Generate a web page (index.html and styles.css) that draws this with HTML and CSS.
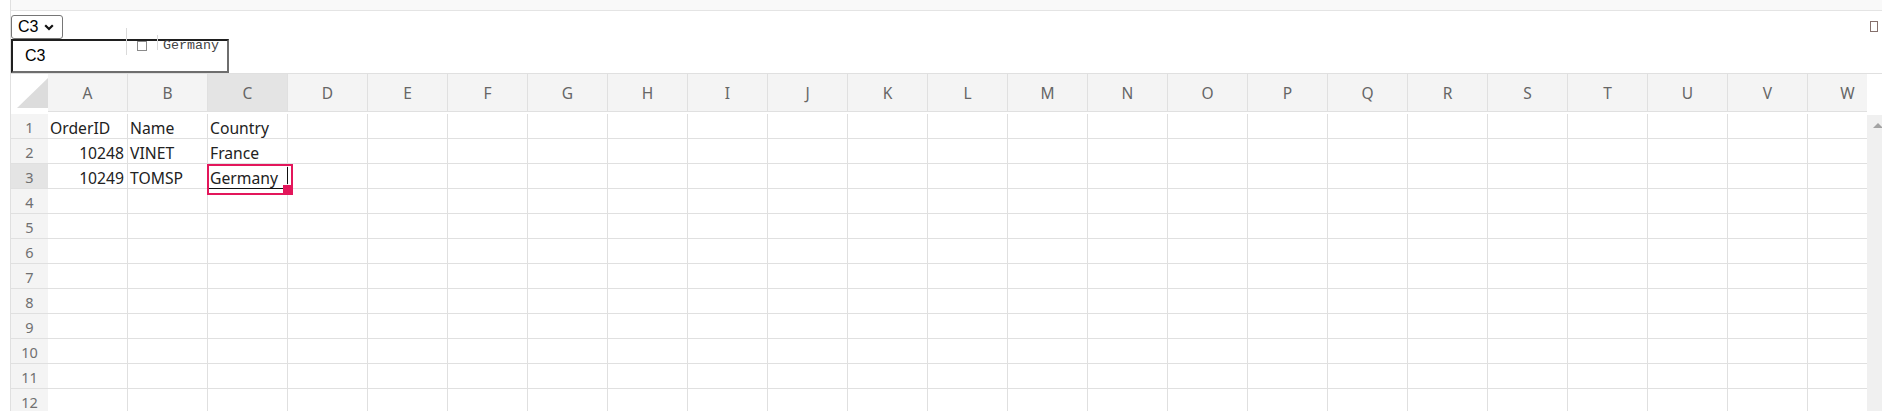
FILE: index.html
```html
<!DOCTYPE html>
<html>
<head>
<meta charset="utf-8">
<link rel="stylesheet" href="styles.css">
</head>
<body>
<div class="sheet">
  <div class="topbar"></div>
  <div class="ribbon">
    <div class="select"><span>C3</span><svg class="chev" width="10" height="7" viewBox="0 0 10 7"><path d="M1.2 1.2 L5 5 L8.8 1.2" fill="none" stroke="#111" stroke-width="2.2"/></svg></div>
    <div class="namebox">C3</div>
    <div class="formula">
      <span class="sep tall"></span>
      <span class="fx-box"></span>
      <span class="sep short"></span>
      <span class="fx-text">Germany</span>
    </div>
    <span class="tofu"></span>
  </div>
  <div class="grid">
    <div class="main">
      <div class="colheads">
        <div class="corner"><svg width="37" height="37" viewBox="0 0 37 37"><polygon points="6,34 37,34 37,4" fill="#dcdcdc"/></svg></div>
        <div class="ch">A</div><div class="ch">B</div><div class="ch active">C</div><div class="ch">D</div><div class="ch">E</div><div class="ch">F</div><div class="ch">G</div><div class="ch">H</div><div class="ch">I</div><div class="ch">J</div><div class="ch">K</div><div class="ch">L</div><div class="ch">M</div><div class="ch">N</div><div class="ch">O</div><div class="ch">P</div><div class="ch">Q</div><div class="ch">R</div><div class="ch">S</div><div class="ch">T</div><div class="ch">U</div><div class="ch">V</div><div class="ch">W</div>
      </div>
      <div class="rows" id="rows"></div>
    </div>
    <div class="vscroll"><span class="up"></span></div>
  </div>
</div>
<script src="app.js"></script>
</body>
</html>
```

FILE: app.js
```js
const data = [
  ["OrderID", "Name", "Country"],
  [{v: "10248", n: true}, "VINET", "France"],
  [{v: "10249", n: true}, "TOMSP", "Germany"]
];
const rows = document.getElementById("rows");
for (let r = 0; r < 13; r++) {
  const row = document.createElement("div");
  row.className = "row";
  const rh = document.createElement("div");
  rh.className = "rh" + (r === 2 ? " active" : "");
  rh.textContent = r + 1;
  row.appendChild(rh);
  for (let c = 0; c < 23; c++) {
    const cell = document.createElement("div");
    cell.className = "cell";
    const d = data[r] && data[r][c];
    if (d) {
      if (typeof d === "object") { cell.textContent = d.v; cell.classList.add("num"); }
      else cell.textContent = d;
    }
    if (r === 2 && c === 2) {
      cell.classList.add("selected");
      const sel = document.createElement("span"); sel.className = "sel-border";
      const vl = document.createElement("span"); vl.className = "ed-v";
      const hl = document.createElement("span"); hl.className = "ed-h";
      const fh = document.createElement("span"); fh.className = "fill";
      cell.append(sel, vl, hl, fh);
    }
    row.appendChild(cell);
  }
  rows.appendChild(row);
}
```

FILE: styles.css
```css
* { box-sizing: border-box; }
html, body { margin: 0; height: 100%; overflow: hidden; background: #fff; }
body { font-family: "Noto Sans", "Open Sans", sans-serif; color: #222; }

.sheet {
  margin-left: 10px;
  border-left: 1px solid #e0e0e0;
  height: 100%;
  display: flex;
  flex-direction: column;
}
.topbar { height: 11px; flex: none; background: #f9f9f9; border-bottom: 1px solid #e4e4e4; }

.ribbon { position: relative; flex: none; height: 62px; padding-top: 4px; }
.select {
  width: 52px; height: 24px;
  border: 1px solid #767676; border-radius: 3px;
  display: flex; align-items: center; gap: 6px;
  padding-left: 6px;
  font: 16px "Liberation Sans", Arial, sans-serif; color: #000;
}
.chev { display: block; margin-top: 1px; }
.namebox {
  width: 218px; height: 34px;
  border: 2px solid; border-color: #1f1f1f #6e6e6e #6e6e6e #1f1f1f;
  padding-left: 12px;
  display: flex; align-items: center;
  font: 16px "Liberation Sans", Arial, sans-serif; color: #000;
}
.formula {
  position: absolute; left: 115px; top: 17px; height: 27px;
  display: flex; align-items: flex-start;
}
.sep { display: block; width: 1px; background: #dadada; }
.sep.tall { height: 27px; }
.sep.short { height: 15px; margin-top: 7px; margin-left: 10px; }
.fx-box { display: block; width: 10px; height: 10px; border: 1px solid #8a8a8a; margin-top: 13px; margin-left: 10px; }
.fx-text { margin-left: 5px; margin-top: 10px; font: 13.33px/15px "Liberation Mono", monospace; color: #444; }
.tofu { position: absolute; right: 4px; top: 10px; width: 8px; height: 11px; border: 1px solid #85706c; }

.grid { flex: 1; display: flex; border-top: 1px solid #e0e0e0; min-height: 0; }
.main { flex: 1; min-width: 0; overflow: hidden; }
.vscroll { width: 15px; flex: none; margin-top: 41px; background: #f0f0f0; position: relative; }
.vscroll .up {
  position: absolute; left: 6px; top: 8px;
  width: 0; height: 0;
  border-left: 5px solid transparent; border-right: 5px solid transparent;
  border-bottom: 5px solid #a3a3a3;
}

.colheads { display: flex; height: 38px; }
.corner { width: 37px; flex: none; background: #fff; }
.corner svg { display: block; }
.ch {
  width: 80px; flex: none;
  background: #f4f4f4;
  border-right: 1px solid #e0e0e0; border-bottom: 1px solid #e0e0e0;
  display: flex; align-items: center; justify-content: center;
  font-size: 15.5px; color: #666; padding-top: 1px;
}
.ch.active { background: #e4e4e4; }

.rows { margin-top: 2px; }
.row { display: flex; height: 25px; }
.rh {
  width: 37px; flex: none;
  background: #f4f4f4; border-bottom: 1px solid #e0e0e0;
  display: flex; align-items: center; justify-content: center;
  font-size: 14.5px; color: #707070; padding-top: 1px;
}
.rh.active { background: #e4e4e4; }
.cell {
  width: 80px; flex: none; position: relative;
  border-right: 1px solid #e0e0e0; border-bottom: 1px solid #e0e0e0;
  display: flex; align-items: flex-end;
  padding: 0 3px 1px 2px;
  font-size: 15.7px; line-height: 18px; color: #222;
  white-space: nowrap;
}
.cell.num { justify-content: flex-end; }
.cell.selected { z-index: 2; }
.sel-border { position: absolute; left: -1px; top: 0; width: 86px; height: 31px; border: 2px solid #e3165b; }
.ed-v { position: absolute; left: 79px; top: 3px; width: 1px; height: 17px; background: #111; }
.ed-h { position: absolute; left: 1px; top: 24px; width: 75px; height: 1px; background: #111; }
.fill { position: absolute; left: 75px; top: 21px; width: 10px; height: 10px; background: #e3165b; }
```
